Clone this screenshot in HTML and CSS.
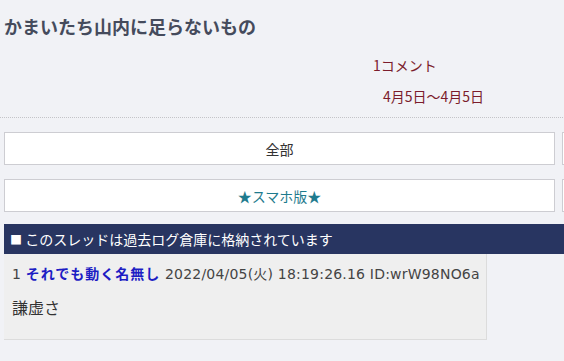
FILE: index.html
```html
<!DOCTYPE html>
<html>
  <head>
    <meta name="viewport" content="width=device-width, initial-scale=1">
    <link rel="stylesheet" href="styles.css">
  </head>
  <body>
    <div class="page">
      <h1 class="title">かまいたち山内に足らないもの</h1>
      <div class="meta">
        <p class="count">1コメント</p>
        <p class="dates">4月5日～4月5日</p>
      </div>
      <div class="buttons">
        <a class="button">全部</a>
        <a class="button"></a>
      </div>
      <div class="buttons">
        <a class="button star">★スマホ版★</a>
        <a class="button"></a>
      </div>
      <div class="archived"><span class="mark">■</span> このスレッドは過去ログ倉庫に格納されています</div>
      <div class="post">
        <div class="post-head">1 <span class="name">それでも動く名無し</span> 2022/04/05(火) 18:19:26.16 ID:wrW98NO6a</div>
        <div class="post-body">謙虚さ</div>
      </div>
    </div>
  </body>
</html>
```

FILE: styles.css
```css
html, body {
  margin: 0;
  background-color: #f1f2f6;
  overflow: hidden;
}

body {
  font-family: "Noto Sans CJK JP", "Noto Sans", sans-serif;
  color: #333;
}

.page {
  width: 1109px;
  padding: 0 4px;
}

.title {
  font-size: 18px;
  font-weight: bold;
  color: #454b5c;
  margin: 0;
  padding-top: 14px;
  line-height: 24px;
}

.meta {
  padding: 17px 0 11px;
  border-bottom: 1px dotted #c4c4c8;
  margin: 0 -4px;
  color: #7b1c2c;
  font-size: 14px;
}

.meta p {
  margin: 0;
  line-height: 20px;
}

.count {
  padding-left: 373px;
}

.dates {
  padding-left: 383px;
  margin-top: 11px !important;
}

.buttons {
  display: flex;
  gap: 7px;
  margin-top: 14px;
}

.button {
  flex: 1;
  height: 31px;
  background: #fff;
  border: 1px solid #cdcdd2;
  display: flex;
  justify-content: center;
  align-items: center;
  font-size: 14px;
  color: #333;
}

.star {
  color: #1f7b8e;
}

.archived {
  margin-top: 12px;
  background-color: #283561;
  color: #fff;
  font-size: 14px;
  height: 30px;
  line-height: 30px;
  padding-left: 6px;
}

.mark {
  font-size: 12px;
}

.post {
  width: 474px;
  background: #efefef;
  border-right: 1px solid #dcdcdc;
  border-bottom: 1px solid #dcdcdc;
  padding: 9px 0 0 8px;
  height: 76px;
}

.post-head {
  font-family: "DejaVu Sans", "Noto Sans CJK JP", sans-serif;
  font-size: 14px;
  line-height: 20px;
  letter-spacing: 0.2px;
  color: #444;
}

.name {
  font-family: "Noto Sans CJK JP", sans-serif;
  color: #1d1dc4;
  font-weight: bold;
  letter-spacing: 1px;
}

.post-body {
  font-size: 16px;
  margin-top: 12px;
  line-height: 22px;
  color: #333;
}
```
